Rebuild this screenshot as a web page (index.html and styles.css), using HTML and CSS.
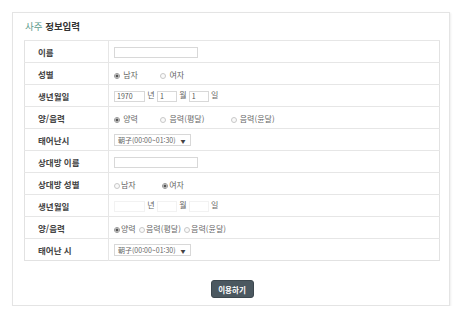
FILE: index.html
```html
<!DOCTYPE html>
<html lang="ko">

<head>
    <meta charset="UTF-8">
    <meta name="viewport" content="width=device-width, initial-scale=1.0">
    <link rel="stylesheet" href="styles.css">
    <title>사주 정보입력</title>
</head>

<body>
    <section class="saju-box">
        <h2 class="saju-title"><span class="accent">사주</span> 정보입력</h2>
        <table class="saju-table">
            <tr>
                <th>이름</th>
                <td><input type="text" class="in-name"></td>
            </tr>
            <tr>
                <th>성별</th>
                <td>
                    <label class="opt wide"><input type="radio" name="sex" checked> 남자</label>
                    <label class="opt"><input type="radio" name="sex"> 여자</label>
                </td>
            </tr>
            <tr>
                <th>생년월일</th>
                <td>
                    <input type="text" class="in-year" value="1970"> <span class="unit">년</span>
                    <input type="text" class="in-day" value="1"> <span class="unit">월</span>
                    <input type="text" class="in-day" value="1"> <span class="unit">일</span>
                </td>
            </tr>
            <tr>
                <th>양/음력</th>
                <td>
                    <label class="opt wide"><input type="radio" name="cal" checked> 양력</label>
                    <label class="opt wide2"><input type="radio" name="cal"> 음력(평달)</label>
                    <label class="opt"><input type="radio" name="cal"> 음력(윤달)</label>
                </td>
            </tr>
            <tr>
                <th>태어난시</th>
                <td><div class="sel">朝子(00:00~01:30) <span class="arrow">▼</span></div></td>
            </tr>
            <tr>
                <th>상대방 이름</th>
                <td><input type="text" class="in-name"></td>
            </tr>
            <tr>
                <th>상대방 성별</th>
                <td>
                    <label class="opt tight wide"><input type="radio" name="sex2">남자</label>
                    <label class="opt tight"><input type="radio" name="sex2" checked>여자</label>
                </td>
            </tr>
            <tr>
                <th>생년월일</th>
                <td>
                    <input type="text" class="in-year flat"> <span class="unit">년</span>
                    <input type="text" class="in-day flat"> <span class="unit">월</span>
                    <input type="text" class="in-day flat"> <span class="unit">일</span>
                </td>
            </tr>
            <tr>
                <th>양/음력</th>
                <td>
                    <label class="opt tight"><input type="radio" name="cal2" checked>양력</label>
                    <label class="opt tight"><input type="radio" name="cal2">음력(평달)</label>
                    <label class="opt tight"><input type="radio" name="cal2">음력(윤달)</label>
                </td>
            </tr>
            <tr>
                <th>태어난 시</th>
                <td><div class="sel">朝子(00:00~01:30) <span class="arrow">▼</span></div></td>
            </tr>
        </table>
        <div class="actions">
            <button class="btn-go">이용하기</button>
        </div>
    </section>
</body>

</html>
```

FILE: styles.css
```css
body {
    margin: 0;
    background: #fff;
    font-family: "Noto Sans CJK KR", "Noto Sans", sans-serif;
    color: #555;
}

.saju-box {
    margin: 12px 0 0 12px;
    width: 438px;
    height: 294px;
    border: 1px solid #e4e4e4;
    box-shadow: 1px 1px 2px #eee;
    padding: 0 9px 0 11px;
    box-sizing: border-box;
}

.saju-title {
    margin: 0;
    padding: 6px 0 0 1px;
    height: 27px;
    box-sizing: border-box;
    font-size: 9.5px;
    font-weight: bold;
    color: #333;
}

.saju-title .accent {
    color: #5c9c8c;
    font-weight: normal;
}

.saju-table {
    width: 416px;
    border-collapse: collapse;
    border: 1px solid #e2e2e2;
    font-size: 8px;
}

.saju-table th,
.saju-table td {
    height: 21px;
    padding: 0;
    border-top: 1px solid #e6e6e6;
    text-align: left;
}

.saju-table th {
    width: 70px;
    padding-left: 13px;
    border-right: 1px solid #e6e6e6;
    color: #444;
    font-size: 8.5px;
    font-weight: bold;
}

.saju-table td {
    padding-left: 5px;
    color: #666;
}

.saju-table input[type="text"] {
    height: 11px;
    padding: 0 2px;
    border: 1px solid #d8d8d8;
    font-size: 7px;
    font-family: inherit;
    color: #555;
    vertical-align: middle;
    box-sizing: border-box;
}

.in-name {
    width: 84px;
}

.in-year {
    width: 31px;
}

.in-day {
    width: 20px;
}

.saju-table input.flat {
    border-color: #f2f2f2;
}

.opt {
    display: inline-block;
    vertical-align: middle;
}

.opt.wide {
    width: 44px;
}

.opt.wide2 {
    width: 68px;
}

.opt.tight.wide {
    width: 45px;
}

.opt input {
    appearance: none;
    width: 6px;
    height: 6px;
    margin: 0 1px 0 0;
    border: 1px solid #c8c8c8;
    border-radius: 50%;
    vertical-align: -1px;
    box-sizing: border-box;
    background: #fafafa;
}

.opt input:checked {
    border-color: #999;
    background: radial-gradient(circle, #555 1.3px, #fff 1.8px);
}

.opt.tight {
    margin-right: 1px;
}

.sel {
    display: inline-block;
    width: 77px;
    height: 12px;
    line-height: 11px;
    padding-left: 3px;
    border: 1px solid #d8d8d8;
    box-sizing: border-box;
    font-size: 7px;
    color: #666;
    vertical-align: middle;
}

.sel .arrow {
    font-size: 5px;
    margin-left: 3px;
    color: #444;
}

.actions {
    display: flex;
    justify-content: center;
    padding-top: 19px;
}

.btn-go {
    width: 43px;
    height: 18px;
    padding: 0;
    border: 1px solid #3c474e;
    border-radius: 3px;
    background: #4b5860;
    color: #fff;
    font-family: inherit;
    font-size: 7.5px;
    font-weight: bold;
    cursor: pointer;
}
```
